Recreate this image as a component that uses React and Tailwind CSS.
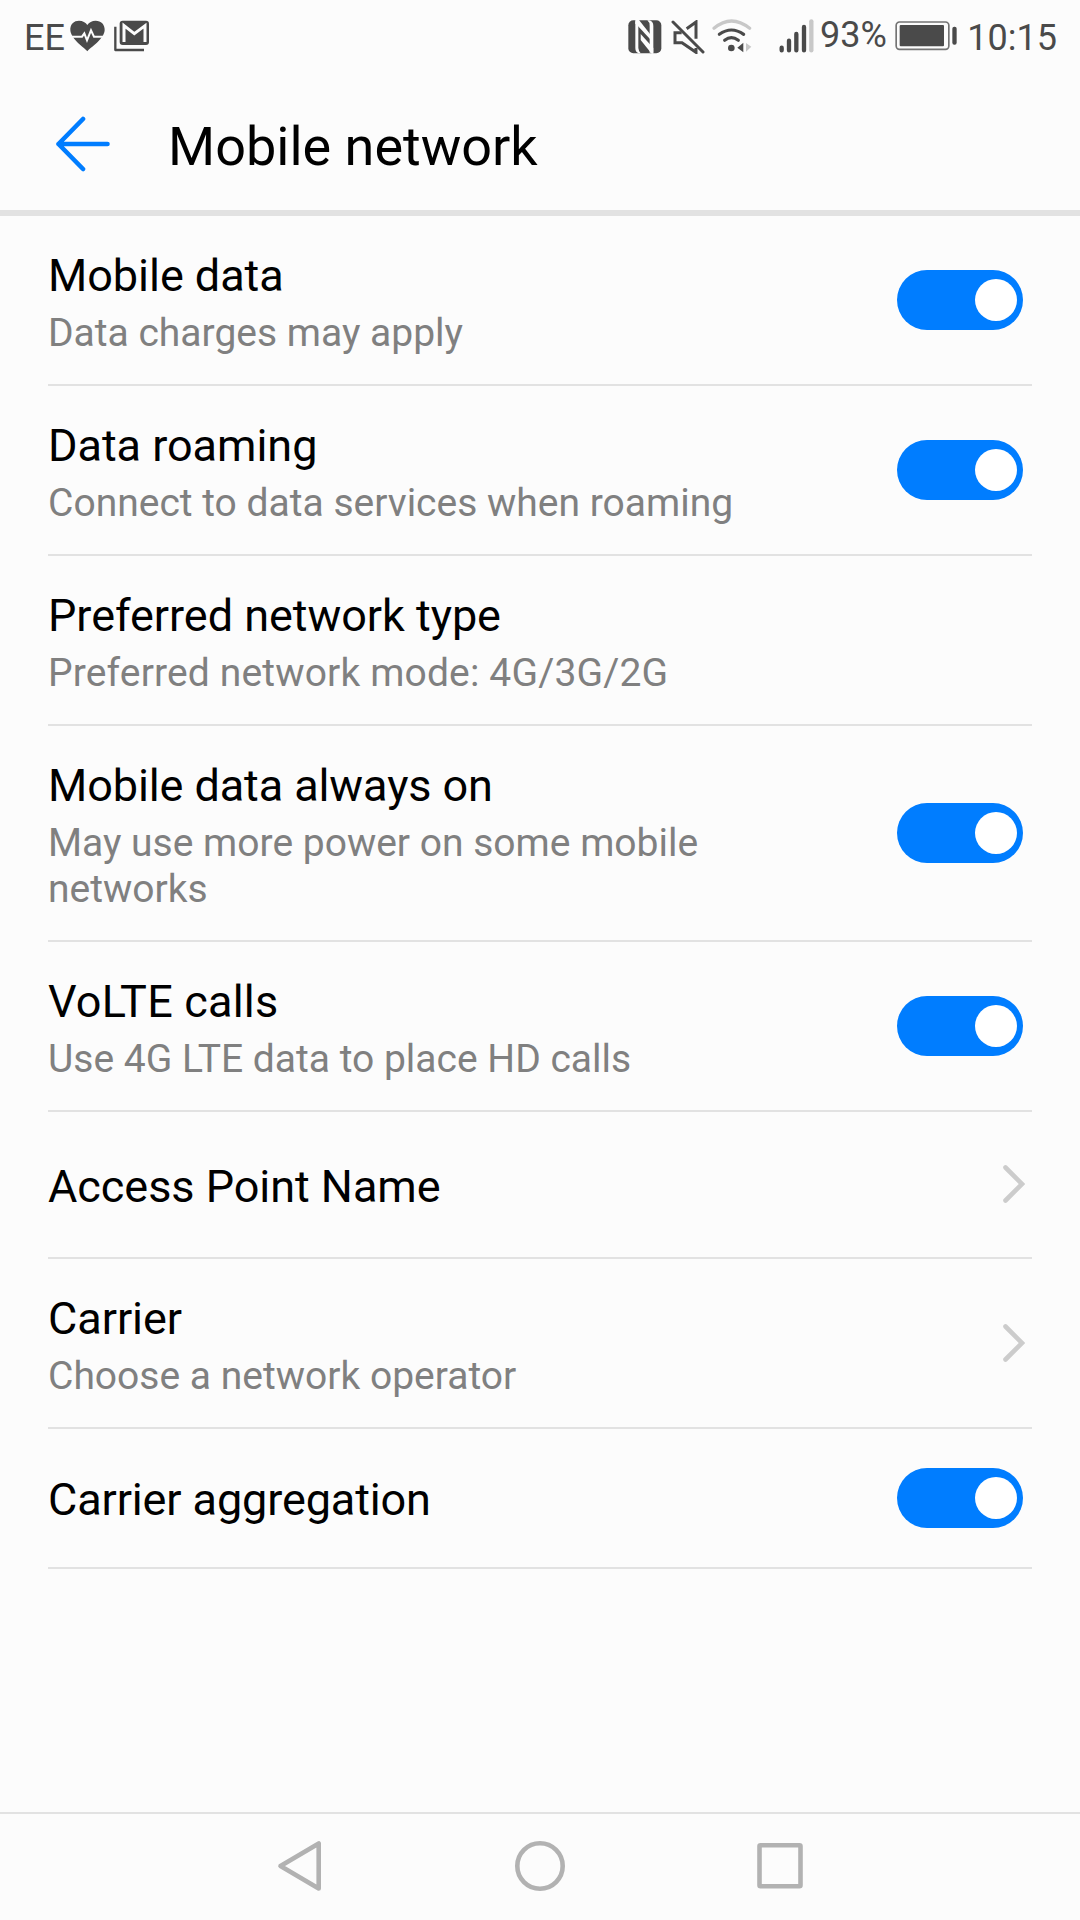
import React from 'react';

const ITEMS = [
  { title: 'Mobile data', sub: 'Data charges may apply', control: 'switch', height: 'h-[170px]' },
  { title: 'Data roaming', sub: 'Connect to data services when roaming', control: 'switch', height: 'h-[170px]' },
  { title: 'Preferred network type', sub: 'Preferred network mode: 4G/3G/2G', subTracking: 'tracking-[0.15px]', height: 'h-[170px]' },
  { title: 'Mobile data always on', sub: 'May use more power on some mobile networks', tracking: 'tracking-[-0.1px]', control: 'switch', height: 'h-[216px]' },
  { title: 'VoLTE calls', sub: 'Use 4G LTE data to place HD calls', tracking: 'tracking-[0.2px]', control: 'switch', height: 'h-[170px]' },
  { title: 'Access Point Name', control: 'link', height: 'h-[147px]' },
  { title: 'Carrier', sub: 'Choose a network operator', control: 'link', height: 'h-[170px]' },
  { title: 'Carrier aggregation', tracking: 'tracking-[-0.12px]', control: 'switch', height: 'h-[140px]' },
];

const HeartIcon = () => (
  <svg width="35" height="32" viewBox="0 0 105 96" className="ml-[5px]">
    <path d="M52 94C44 84 3 58 1 31C0 12 12 2 27 2C38 2 47 7 52 15C57 7 66 2 77 2C93 2 105 13 104 31C102 58 62 82 52 94Z" fill="#4a4a4a" />
    <path d="M0 50H36L43 40L51 61L63 31L72 50H105" fill="none" stroke="#fcfcfc" strokeWidth="6" />
  </svg>
);

const MailIcon = () => (
  <svg width="36" height="32" viewBox="0 0 108 96" className="ml-[9px]">
    <path d="M4 20V90H90" fill="none" stroke="#4a4a4a" strokeWidth="7" strokeLinejoin="round" />
    <rect x="17" y="2" width="88" height="73" rx="9" fill="#4a4a4a" />
    <path d="M30 66V17L61 41L93 17V66" fill="none" stroke="#fcfcfc" strokeWidth="9" />
  </svg>
);

const NfcIcon = () => (
  <svg width="34" height="34" viewBox="0 0 102 102" className="mt-px">
    <rect x="1" y="1" width="99" height="99" rx="15" fill="#4a4a4a" />
    <g fill="#fcfcfc">
      <path d="M22 4H31V84Q32 94 38 100H32Q22 97 22 84Z" />
      <path d="M65 18Q65 6 58 1H64Q76 4 76 18V98H65Z" />
      <path d="M22 0H33L66 42V57L22 10Z" />
      <path d="M38 42L76 84V101H71L38 60Z" />
    </g>
  </svg>
);

const MuteIcon = () => (
  <svg width="34" height="34" viewBox="0 0 102 102" className="mt-px ml-[9px]" fill="none" stroke="#4a4a4a" strokeWidth="9">
    <path d="M47 26L75 6V56" />
    <path d="M32 38H12V68H33L75 97V84" />
    <path d="M6 6L96 96" strokeLinecap="round" />
  </svg>
);

const WifiIcon = () => (
  <svg width="40" height="35" viewBox="0 0 120 105" className="mt-px ml-[7.5px]" fill="none" strokeWidth="9.5" strokeLinecap="round">
    <path d="M6 28Q58 -16 113 28" stroke="#c8c8c8" />
    <path d="M22 46Q58 20 95 46" stroke="#4a4a4a" />
    <path d="M38 64Q58 48 79 64" stroke="#4a4a4a" />
    <circle cx="58" cy="87" r="10" fill="#4a4a4a" />
    <path d="M94 71V100L76 86Z" fill="#4a4a4a" />
    <path d="M102 72V98L118 83Z" fill="#c8c8c8" />
  </svg>
);

const SignalIcon = () => (
  <svg width="36" height="34" viewBox="0 0 108 102" className="ml-[27px]" strokeWidth="13" strokeLinecap="round">
    <path d="M8 86V94M30 65V94M52 45V94M75 24V94" stroke="#4a4a4a" />
    <path d="M97 7V94" stroke="#c8c8c8" />
  </svg>
);

const BatteryIcon = () => (
  <svg width="62" height="30" viewBox="0 0 186 90" className="ml-[8.5px]">
    <rect x="3.5" y="3" width="158" height="82" rx="10" fill="none" stroke="#747474" strokeWidth="5" />
    <rect x="14" y="12" width="133" height="64" rx="3" fill="#4a4a4a" />
    <rect x="172" y="17" width="13" height="54" rx="6" fill="#4a4a4a" />
  </svg>
);

const Switch = () => (
  <div className="mr-[9px] flex h-[60px] w-[126px] shrink-0 items-center justify-end rounded-full bg-[#007dff] pr-[6px]">
    <div className="size-[42px] rounded-full bg-white" />
  </div>
);

const Chevron = () => (
  <svg width="22" height="40" viewBox="0 0 22 40" className="mr-[7px] mb-px shrink-0" fill="none" stroke="#cccccc" strokeWidth="4.6" strokeLinecap="round">
    <path d="M2.5 3.5L19 20L2.5 36.5" />
  </svg>
);

const Row = ({ item }) => (
  <div className={`flex items-center justify-between border-b-2 border-[#e2e2e2] ${item.height}`}>
    <div className={`max-w-[760px] ${item.sub ? 'pt-[5px]' : 'pt-[3px]'}`}>
      <p className={`text-[45px] leading-[53px] text-black ${item.tracking || 'tracking-[-0.04px]'}`}>{item.title}</p>
      {item.sub && <p className={`mt-2 text-[39px] leading-[46px] text-[#808080] ${item.subTracking || ''}`}>{item.sub}</p>}
    </div>
    {item.control === 'switch' && <Switch />}
    {item.control === 'link' && <Chevron />}
  </div>
);

export default function App() {
  return (
    <div className="flex h-[1920px] w-[1080px] flex-col overflow-hidden bg-[#fcfcfc] font-['Roboto',sans-serif]">
      {/* status bar */}
      <div className="flex h-[72px] shrink-0 items-center justify-between pr-[23px] pl-6 text-[36px] leading-none whitespace-nowrap text-[#4a4a4a]">
        <div className="flex items-center">
          <span className="pt-[4px]">EE</span>
          <HeartIcon />
          <MailIcon />
        </div>
        <div className="flex items-center">
          <NfcIcon />
          <MuteIcon />
          <WifiIcon />
          <SignalIcon />
          <span className="mb-[2px] ml-[5px]">93%</span>
          <BatteryIcon />
          <span className="ml-[10px] pt-[4px]">10:15</span>
        </div>
      </div>

      {/* header */}
      <div className="flex h-[144px] shrink-0 items-center border-b-6 border-[#e2e2e2] pt-[5px] pl-14">
        <svg width="54" height="56" viewBox="0 0 54 56" fill="none" stroke="#007dff" strokeWidth="4.6" strokeLinecap="round" strokeLinejoin="round">
          <path d="M27 3L2.5 28L27 53M2.5 28H51.5" />
        </svg>
        <h1 className="mt-[7px] ml-[58px] text-[54px] leading-[64px] text-black">Mobile network</h1>
      </div>

      <div className="flex-1 px-12">
        {ITEMS.map((item) => <Row key={item.title} item={item} />)}
      </div>

      {/* navigation keys */}
      <div className="flex h-[108px] shrink-0 items-center justify-center border-t-2 border-[#e2e2e2] pb-[2px]">
        <svg width="530" height="54" viewBox="0 0 530 54" fill="none" stroke="#b2b2b2" strokeWidth="4.6" strokeLinejoin="round">
          <path d="M43.7 4.5V49.5L5.5 27Z" />
          <circle cx="265" cy="27" r="22.7" />
          <rect x="484.5" y="6.3" width="41" height="41" rx="1" />
        </svg>
      </div>
    </div>
  );
}
